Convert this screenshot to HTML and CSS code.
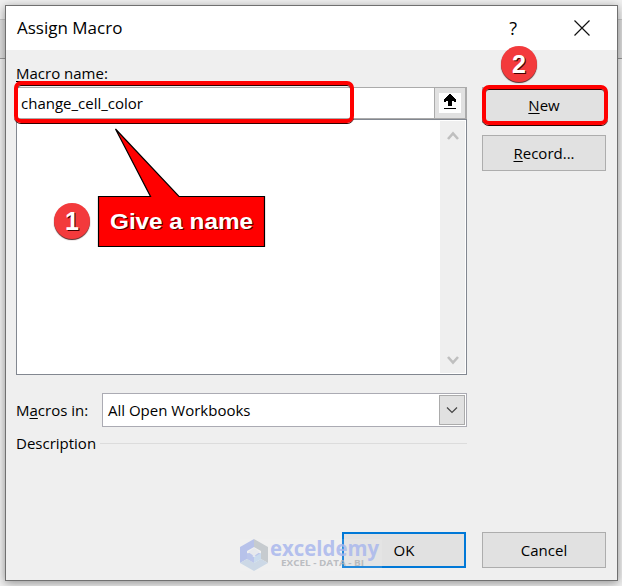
FILE: index.html
```
<!DOCTYPE html>
<html lang="en">
<head>
<meta charset="utf-8">
<title>Assign Macro</title>
<link rel="stylesheet" href="styles.css">
</head>
<body>
<main class="dialog">
  <header class="titlebar">
    <h1 class="title"><span class="t-title">Assign Macro</span></h1>
    <span class="help">?</span>
    <svg class="close" width="16" height="16" viewBox="0 0 16 16"><path d="M.5.5l15 15M15.5.5l-15 15" fill="none" stroke="#111" stroke-width="1.2"/></svg>
  </header>
  <div class="content">
    <section class="fields">
      <label class="label t-name"><u>M</u>acro name:</label>
      <div class="name-row">
        <span class="value t-value">change_cell_color</span>
        <span class="ref-button"><svg width="22" height="20" viewBox="0 0 22 20" shape-rendering="crispEdges"><path fill="#fff" d="M0 0h22v20H0z"/><path d="M10 1h2v1h1v1h1v1h1v1h1v1h1v3h-2V8h-2v5H9V8H7v1H5V6h1V5h1V4h1V3h1V2h1zM5 15h12v1H5z"/></svg></span>
      </div>
      <div class="list">
        <div class="scrollbar">
          <svg width="12" height="10" viewBox="0 0 12 10"><path d="M1 8l5-5.500 5 5.500" fill="none" stroke="#bfbfbf" stroke-width="2.600"/></svg>
          <svg width="12" height="10" viewBox="0 0 12 10"><path d="M1 2l5 5.500 5-5.500" fill="none" stroke="#bfbfbf" stroke-width="2.600"/></svg>
        </div>
      </div>
      <div class="combo-row">
        <label class="t-in">M<u>a</u>cros in:</label>
        <div class="combo"><span class="t-combo">All Open Workbooks</span><span class="drop"><svg width="12" height="8" viewBox="0 0 12 8"><path d="M1 1.500l5 5 5-5" fill="none" stroke="#444" stroke-width="1.200"/></svg></span></div>
      </div>
      <div class="description"><span class="t-desc">Description</span><i class="rule"></i></div>
    </section>
    <aside class="actions">
      <button class="button"><span class="t-new"><u>N</u>ew</span></button>
      <button class="button"><span class="t-record"><u>R</u>ecord...</span></button>
    </aside>
  </div>
  <footer class="footer">
    <button class="button primary"><span>OK</span></button>
    <button class="button"><span class="t-cancel">Cancel</span></button>
  </footer>
</main>

<div class="mark mark-name"></div>
<div class="mark mark-new"></div>
<svg class="callout" width="170" height="122" viewBox="0 0 170 122">
  <path d="M1.500 70.500H53.500L18.500 3 82 70.500H167.500V120.500H1.500z" fill="#f00" stroke="#000" stroke-width="1.200"/>
  <text class="callout-text shade" x="14" y="104" textLength="143" lengthAdjust="spacingAndGlyphs">Give a name</text>
  <text class="callout-text" x="13" y="103" textLength="143" lengthAdjust="spacingAndGlyphs">Give a name</text>
</svg>
<div class="badge badge-one">1</div>
<div class="badge badge-two">2</div>
<div class="watermark">
  <svg width="28" height="32" viewBox="0 0 28 32"><path d="M14 0L0 8v16l7-4v-8l7-4z" fill="#aebbea"/><path d="M14 0l14 8v16l-7-4v-8l-7-4z" fill="#bfc5ca"/><path d="M0 24l7-4 7 4 7-4 7 4-14 8z" fill="#c6d5e5"/><path d="M14 11l7 4v5l-7-4-7 4v-5z" fill="#b2bfeb"/><path d="M7 14l7 4v6l-7-4z" fill="#b2bfeb"/><path d="M21 14l-7 4v6l7-4z" fill="#c4d8ed"/><path d="M14 9l6 4-6 4-6-4z" fill="#e6e9ed"/></svg>
  <svg width="112" height="32" viewBox="0 0 112 32"><text class="brand" x="2" y="17" textLength="109" lengthAdjust="spacingAndGlyphs">exceldemy</text><text class="tagline" x="13" y="27" textLength="83" lengthAdjust="spacingAndGlyphs">EXCEL - DATA - BI</text></svg>
</div>
</body>
</html>
```

FILE: styles.css
```
* { box-sizing: border-box; }
body {
  margin: 0;
  width: 622px;
  height: 586px;
  padding: 5px;
  overflow: hidden;
  position: relative;
  background: linear-gradient(#f0f0f0 19px, #c8c8c8 19px 20px, #dedede 20px 58px, #999 58px 59px, #f0f0f0 59px);
  font: 15px/20px "Open Sans", "Noto Sans", sans-serif;
  color: #000;
}
u { text-decoration-thickness: 1px; text-underline-offset: 2px; }
.dialog {
  width: 613px;
  height: 576px;
  border: 1px solid #707070;
  background: #efefef;
  box-shadow: 0 2px 9px rgba(0, 0, 0, .4);
  display: flex;
  flex-direction: column;
}
.titlebar {
  height: 44px;
  background: #fff;
  display: flex;
  align-items: center;
  padding: 0 27px 0 11px;
}
.title { margin: 0; flex: 1; font-size: 17px; font-weight: 400; line-height: 24px; }
.help { font-size: 19px; margin-right: 57px; line-height: 24px; transform: scaleX(.95); }
.content { display: flex; gap: 15px; padding: 0 11px 0 10px; flex: 1; }
.fields { width: 451px; display: flex; flex-direction: column; }
.label { height: 37px; padding-top: 13px; }
.name-row {
  height: 32px;
  display: flex;
  border: 1px solid #ababab;
  border-right-width: 0;
  background: #fff;
  align-items: center;
  padding-left: 4px;
}
.value { flex: 1; }
.ref-button {
  width: 33px;
  height: 32px;
  border: 2px solid #ababab;
  border-width: 1px 2px 1px 1px;
  background: #e1e1e1;
  display: flex;
  align-items: center;
  justify-content: center;
}
.list { height: 256px; border: 1px solid #828790; background: #fff; display: flex; justify-content: flex-end; padding: 1px; }
.scrollbar { width: 25px; background: #efefef; display: flex; flex-direction: column; justify-content: space-between; align-items: center; padding: 10px 0 8px; }
.combo-row { display: flex; margin-top: 18px; height: 34px; align-items: center; justify-content: space-between; }
.combo { width: 365px; height: 34px; border: 1px solid #ababb3; background: #fff; padding: 1px 1px 1px 5px; display: flex; justify-content: space-between; align-items: center; }
.drop { width: 26px; height: 30px; border: 1px solid #ababab; background: #e1e1e1; display: flex; justify-content: center; align-items: center; }
.description { display: flex; align-items: center; height: 20px; margin-top: 6px; }
.rule { margin-left: auto; width: 367px; height: 1px; background: #dcdcdc; }
.actions { padding-top: 37px; display: flex; flex-direction: column; gap: 12px; }
.button { width: 124px; height: 36px; border: 1px solid #adadad; background: #e1e1e1; padding: 0; font: inherit; color: #000; border-radius: 0; }
.primary { border: 2px solid #0078d7; }
.footer { display: flex; justify-content: flex-end; gap: 16px; padding: 0 11px 12px; }
.mark { position: absolute; border: 4px solid #f00; border-radius: 7px; box-shadow: 0 1px 0 #300, inset 0 1px 0 #300; }
.mark-name { left: 14px; top: 81px; width: 340px; height: 42px; }
.mark-new { left: 482px; top: 85px; width: 126px; height: 40px; }
.callout { position: absolute; left: 97px; top: 126px; }
.callout-text { font: 700 22px "Liberation Sans", sans-serif; fill: #fff; }
.shade { fill: #500; }
.badge {
  position: absolute;
  width: 36px;
  height: 36px;
  border-radius: 50%;
  background: #f33a3c;
  box-shadow: 0 1px 1px #522;
  color: #fff;
  text-align: center;
  font: 700 25px/36px "Liberation Sans", sans-serif;
  text-shadow: 1px 1px 0 #400;
}
.badge-one { left: 54px; top: 203px; }
.badge-two { left: 501px; top: 46px; }
.watermark { position: absolute; left: 240px; top: 539px; width: 142px; height: 32px; display: flex; background: rgba(255, 255, 255, .16); opacity: .85; }
.brand { font: 700 21px "Open Sans", sans-serif; fill: #aab8ed; }
.tagline { font: 700 8px "Open Sans", sans-serif; fill: #b2b5ba; }
```
